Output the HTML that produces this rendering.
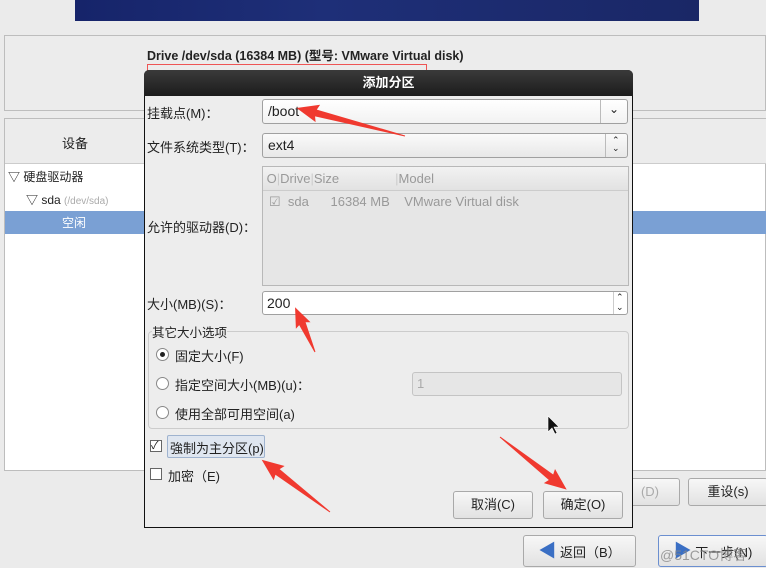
<!DOCTYPE html>
<html><head><meta charset="utf-8"><style>
body{margin:0;width:766px;height:567px;background:#ebebeb;position:relative;overflow:hidden;font-family:"Liberation Sans","Noto Sans CJK SC",sans-serif;font-size:13px;color:#222}
.a{position:absolute}
.btn{position:absolute;border:1px solid #a9a9a9;border-radius:3px;background:linear-gradient(#f7f7f7,#e2e2e2);text-align:center;font-size:13px;box-sizing:border-box}
.ent{position:absolute;background:#fff;border:1px solid #a0a0a0;border-radius:3px;box-sizing:border-box}
.radio{position:absolute;width:11px;height:11px;border:1px solid #888;border-radius:50%;background:#fff}
.cb{position:absolute;width:10px;height:10px;border:1px solid #666;background:#fff}
</style></head><body>
<div class="a" style="left:75px;top:0;width:624px;height:21px;background:linear-gradient(90deg,#16246a,#1e2f78 40%,#1a2766);"></div>
<div class="a" style="left:4px;top:35px;width:762px;height:76px;border:1px solid #bdbdbd;box-sizing:border-box;background:#ececec"></div>
<div class="a" style="left:147px;top:45px;font-weight:bold;font-size:12.5px">Drive /dev/sda (16384 MB) (型号: VMware Virtual disk)</div>
<div class="a" style="left:147px;top:64px;width:280px;height:8px;border:1px solid #e55;border-bottom:none;box-sizing:border-box"></div>
<div class="a" style="left:4px;top:118px;width:762px;height:353px;border:1px solid #bdbdbd;box-sizing:border-box;background:#fff"></div>
<div class="a" style="left:5px;top:119px;width:761px;height:44px;background:#ececec;border-bottom:1px solid #ccc"></div>
<div class="a" style="left:62px;top:133px">设备</div>
<div class="a" style="left:8px;top:168px;font-size:12px">▽ 硬盘驱动器</div>
<div class="a" style="left:26px;top:191px;font-size:12px">▽ sda <span style="color:#aaa;font-size:10px">(/dev/sda)</span></div>
<div class="a" style="left:5px;top:211px;width:761px;height:23px;background:#7aa0d4"></div>
<div class="a" style="left:62px;top:214px;color:#fff;font-size:12px">空闲</div>
<div class="btn" style="left:620px;top:478px;width:60px;height:28px;line-height:26px;color:#aaa">(D)</div>
<div class="btn" style="left:688px;top:478px;width:80px;height:28px;line-height:26px">重设(s)</div>
<div class="btn" style="left:523px;top:535px;width:113px;height:32px;line-height:30px"><span style="color:#3a6fc4;font-size:18px">◀</span> 返回（B）</div>
<div class="btn" style="left:658px;top:535px;width:110px;height:32px;line-height:30px;border-color:#6b8fd0"><span style="color:#3a6fc4;font-size:18px">▶</span> 下一步(N)</div>
<div class="a" style="left:660px;top:545px;color:#888;font-size:14px;opacity:.8">@51CTO博客</div>

<div class="a" style="left:144px;top:70px;width:489px;height:458px;background:#ededed;border:1px solid #111;box-sizing:border-box;border-radius:5px 5px 0 0"></div>
<div class="a" style="left:144px;top:70px;width:489px;height:26px;background:linear-gradient(#3a3a3a,#1c1c1c);border-radius:5px 5px 0 0;color:#fff;text-align:center;line-height:26px;font-weight:bold">添加分区</div>
<div class="a" style="left:147px;top:103px">挂载点(M)：</div>
<div class="ent" style="left:262px;top:99px;width:366px;height:25px;background:linear-gradient(#fff,#f2f2f2)"></div>
<div class="a" style="left:268px;top:103px;font-size:14px">/boot</div>
<div class="a" style="left:600px;top:100px;width:1px;height:23px;background:#bbb"></div>
<div class="a" style="left:609px;top:102px;font-size:12px">⌄</div>
<div class="a" style="left:147px;top:137px">文件系统类型(T)：</div>
<div class="ent" style="left:262px;top:133px;width:366px;height:25px;background:linear-gradient(#fafafa,#e8e8e8)"></div>
<div class="a" style="left:268px;top:137px;font-size:14px">ext4</div>
<div class="a" style="left:605px;top:134px;width:1px;height:23px;background:#bbb"></div>
<div class="a" style="left:612px;top:136px;font-size:9px;line-height:8px">⌃<br>⌄</div>
<div class="a" style="left:262px;top:166px;width:367px;height:120px;border:1px solid #b8b8b8;box-sizing:border-box;background:#e6e6e6"></div>
<div class="a" style="left:263px;top:167px;width:365px;height:23px;background:linear-gradient(#f2f2f2,#e2e2e2);border-bottom:1px solid #ccc;color:#999;line-height:23px">&nbsp;O<span style="color:#ccc">|</span>Drive<span style="color:#ccc">|</span>Size<span style="margin-left:56px;color:#ccc">|</span>Model</div>
<div class="a" style="left:269px;top:194px;color:#999;font-size:13px">☑&nbsp; sda &nbsp;&nbsp;&nbsp;&nbsp;&nbsp;16384 MB &nbsp;&nbsp;&nbsp;VMware Virtual disk</div>
<div class="a" style="left:147px;top:217px">允许的驱动器(D)：</div>
<div class="a" style="left:147px;top:294px">大小(MB)(S)：</div>
<div class="ent" style="left:262px;top:291px;width:366px;height:24px"></div>
<div class="a" style="left:267px;top:295px;font-size:14px">200</div>
<div class="a" style="left:613px;top:292px;width:1px;height:22px;background:#ccc"></div>
<div class="a" style="left:616px;top:292px;font-size:9px;line-height:10px">⌃<br>⌄</div>
<div class="a" style="left:148px;top:331px;width:481px;height:98px;border:1px solid #ccc;border-radius:4px;box-sizing:border-box"></div>
<div class="a" style="left:152px;top:322px;background:#ededed;font-size:12.5px">其它大小选项</div>
<div class="radio" style="left:156px;top:348px"><div style="width:5px;height:5px;background:#222;border-radius:50%;margin:3px"></div></div>
<div class="a" style="left:175px;top:346px">固定大小(F)</div>
<div class="radio" style="left:156px;top:377px"></div>
<div class="a" style="left:175px;top:375px">指定空间大小(MB)(u)：</div>
<div class="ent" style="left:412px;top:372px;width:210px;height:24px;background:#e6e6e6;border-color:#c4c4c4"></div>
<div class="a" style="left:417px;top:376px;color:#aaa">1</div>
<div class="radio" style="left:156px;top:406px"></div>
<div class="a" style="left:175px;top:404px">使用全部可用空间(a)</div>
<div class="cb" style="left:150px;top:440px;font-size:11px;line-height:10px">✓</div>
<div class="a" style="left:167px;top:435px;width:98px;height:23px;border:1px solid #9fb3cf;background:#dfe6f0;border-radius:2px;box-sizing:border-box"></div>
<div class="a" style="left:170px;top:438px">強制为主分区(p)</div>
<div class="cb" style="left:150px;top:468px"></div>
<div class="a" style="left:168px;top:466px">加密（E)</div>
<div class="btn" style="left:453px;top:491px;width:80px;height:28px;line-height:26px">取消(C)</div>
<div class="btn" style="left:543px;top:491px;width:80px;height:28px;line-height:26px">确定(O)</div>
<svg class="a" style="left:0;top:0" width="766" height="567">
<g fill="#f0392f">
<polygon transform="translate(405,136) rotate(194.5)" points="0,-0.5 92,-3.5 90,-9 112,0 90,9 92,3.5 0,0.5"/>
<polygon transform="translate(315,352) rotate(246)" points="0,-0.5 31,-3.5 29,-8 49,0 29,8 31,3.5 0,0.5"/>
<polygon transform="translate(330,512) rotate(217.4)" points="0,-0.5 66,-3.5 64,-9 86,0 64,9 66,3.5 0,0.5"/>
<polygon transform="translate(500,437) rotate(38.3)" points="0,-0.5 65,-3.5 63,-9 85,0 63,9 65,3.5 0,0.5"/>
</g>
<polygon points="548,416 548,432 552,428 555,434 557,433 554,427 559,427" fill="#111" stroke="#fff" stroke-width=".6"/>
</svg>
</body></html>
